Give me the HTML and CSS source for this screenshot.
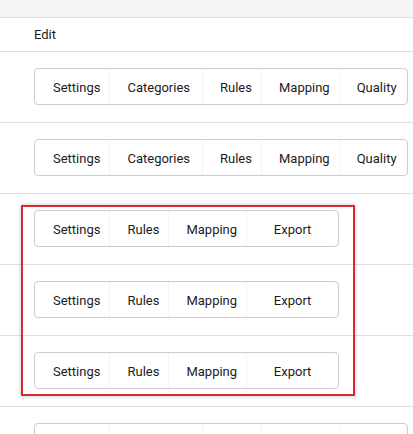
FILE: index.html
```html
<!DOCTYPE html>
<html>
<head>
<meta charset="utf-8">
<link rel="stylesheet" href="styles.css">
</head>
<body>
<div class="page">
  <div class="topbar"></div>
  <div class="row row-head"><span class="edit">Edit</span></div>
  <div class="row">
    <div class="group">
      <button class="btn">Settings</button><button class="btn btn-cat">Categories</button><button class="btn">Rules</button><button class="btn">Mapping</button><button class="btn btn-last">Quality</button>
    </div>
  </div>
  <div class="row">
    <div class="group">
      <button class="btn">Settings</button><button class="btn btn-cat">Categories</button><button class="btn">Rules</button><button class="btn">Mapping</button><button class="btn btn-last">Quality</button>
    </div>
  </div>
  <div class="row">
    <div class="group">
      <button class="btn">Settings</button><button class="btn">Rules</button><button class="btn">Mapping</button><button class="btn btn-wide">Export</button>
    </div>
  </div>
  <div class="row">
    <div class="group">
      <button class="btn">Settings</button><button class="btn">Rules</button><button class="btn">Mapping</button><button class="btn btn-wide">Export</button>
    </div>
  </div>
  <div class="row">
    <div class="group">
      <button class="btn">Settings</button><button class="btn">Rules</button><button class="btn">Mapping</button><button class="btn btn-wide">Export</button>
    </div>
  </div>
  <div class="row">
    <div class="group">
      <button class="btn">Settings</button><button class="btn btn-cat">Categories</button><button class="btn">Rules</button><button class="btn">Mapping</button><button class="btn btn-last">Quality</button>
    </div>
  </div>
  <div class="highlight"></div>
</div>
</body>
</html>
```

FILE: styles.css
```css
html, body {
  margin: 0;
  padding: 0;
  background: #ffffff;
  overflow: hidden;
}
body {
  font-family: Roboto, "Liberation Sans", Arial, sans-serif;
  font-size: 13px;
  color: #1c1c1c;
}
.page {
  position: relative;
  width: 413px;
  height: 434px;
  overflow: hidden;
}
.topbar {
  height: 17px;
  background: #f5f5f5;
  border-bottom: 1px solid #e0e0e0;
}
.row {
  border-bottom: 1px solid #e0e0e0;
  padding: 16px 0 0 34px;
  box-sizing: border-box;
  height: 71px;
}
.row-head {
  height: 34px;
  padding: 0 0 0 34px;
  display: flex;
  align-items: center;
}
.edit {
  font-size: 13px;
  color: #1c1c1c;
}
.group {
  display: inline-flex;
  height: 37px;
  border: 1px solid #cccccc;
  border-radius: 4px;
  box-sizing: border-box;
  background: #fff;
  white-space: nowrap;
}
.btn {
  font-family: inherit;
  font-size: 13px;
  color: #1c1c1c;
  background: transparent;
  border: 0;
  border-left: 1px solid #f4f4f4;
  margin: 0;
  padding: 1px 9px 0 17px;
  height: 100%;
  cursor: pointer;
}
.btn:first-child {
  border-left: 0;
  padding-left: 18px;
}
.btn-cat {
  padding-right: 12px;
}
.btn-last {
  padding-right: 10px;
}
.btn-wide {
  width: 92px;
  padding: 1px 0 0 0;
  text-align: center;
}
.highlight {
  position: absolute;
  left: 21px;
  top: 205px;
  width: 334px;
  height: 191px;
  box-sizing: border-box;
  border: 2px solid #db2a2f;
  box-shadow: 0 0 4px rgba(0, 0, 0, 0.25);
}
```
